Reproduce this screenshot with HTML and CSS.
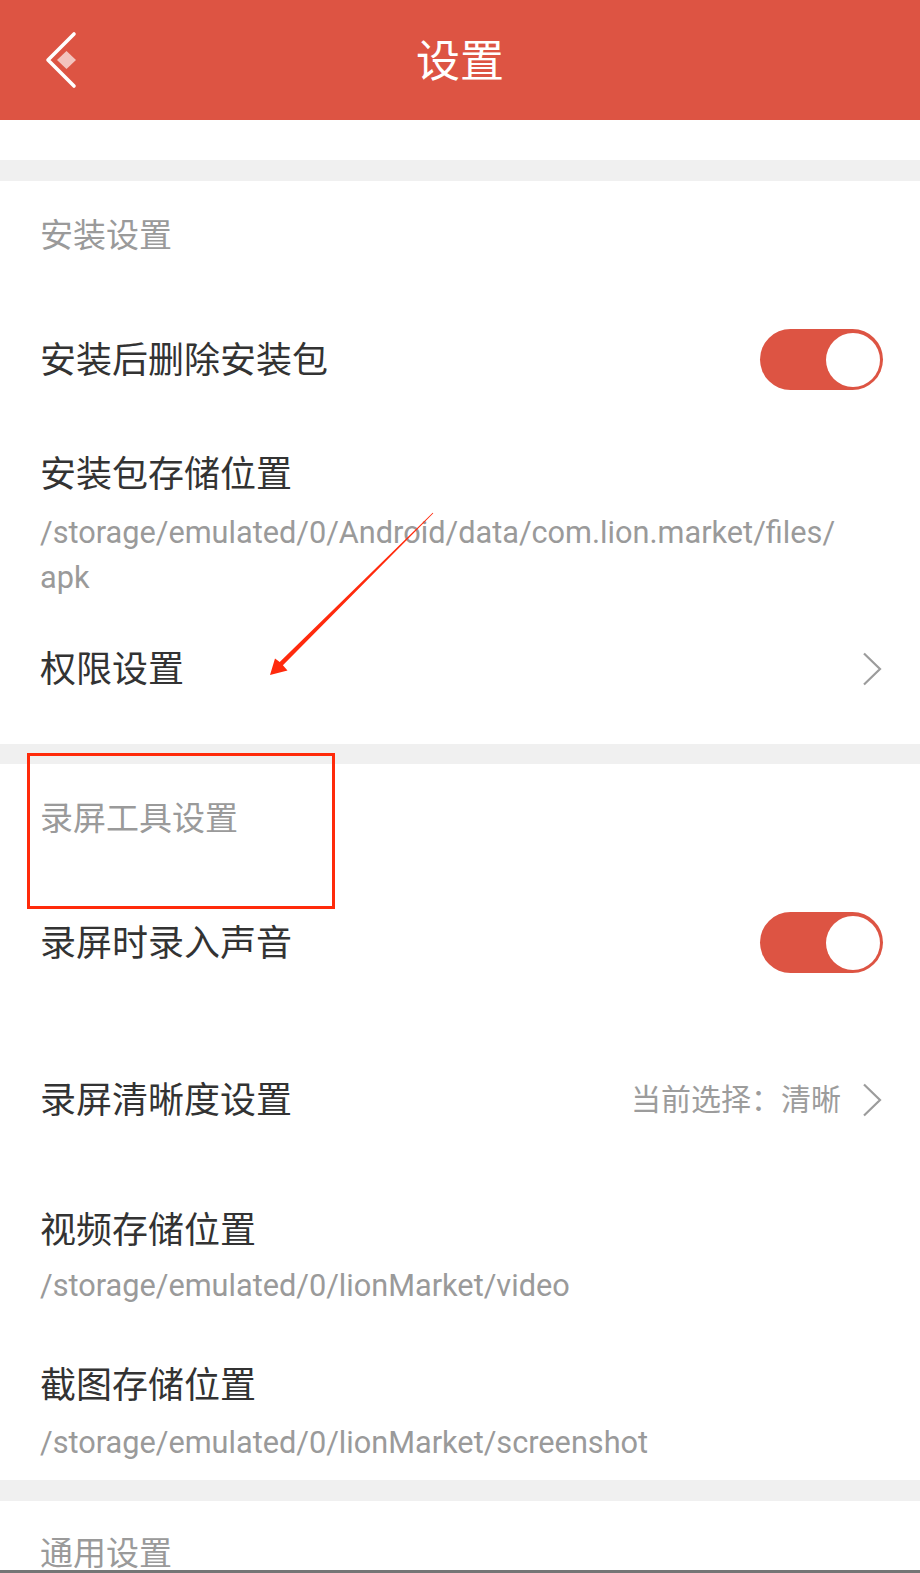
FILE: index.html
```html
<!DOCTYPE html>
<html lang="zh-CN">
<head>
<meta charset="utf-8">
<title>设置</title>
<link rel="stylesheet" href="styles.css">
</head>
<body>
<div class="app">
  <header class="topbar">
    <div class="back">
      <svg class="back-icon" width="44" height="64" viewBox="40 28 44 64">
        <polyline points="74,34 48,60 74,86" fill="none" stroke="#fff" stroke-width="3.6" stroke-linecap="round" stroke-linejoin="round"/>
        <polygon points="57,60 66.5,51 76,60 66.5,69" fill="#fff" fill-opacity="0.65"/>
      </svg>
    </div>
    <h1 class="title">设置</h1>
    <div class="spacer"></div>
  </header>

  <main class="content">
    <div class="top-blank"></div>

    <section class="section s1">
      <div class="sec-head h1pad">安装设置</div>
      <div class="row row-switch m73">
        <span class="row-title">安装后删除安装包</span>
        <span class="switch on"><span class="knob"></span></span>
      </div>
      <div class="row-stack m61">
        <div class="row-title">安装包存储位置</div>
        <div class="path p17">/storage/emulated/0/Android/data/com.lion.market/files/<wbr>apk</div>
      </div>
      <div class="row row-link m47 pb53">
        <span class="row-title">权限设置</span>
        <svg class="chev" width="20" height="34" viewBox="0 0 20 34"><polyline points="2,1.5 18,17 2,32.5" fill="none" stroke="#9c9c9c" stroke-width="2.2"/></svg>
      </div>
    </section>

    <section class="section s2">
      <div class="sec-head h2pad">录屏工具设置</div>
      <div class="row row-switch m74">
        <span class="row-title">录屏时录入声音</span>
        <span class="switch on"><span class="knob"></span></span>
      </div>
      <div class="row row-link m105">
        <span class="row-title">录屏清晰度设置</span>
        <span class="row-right">
          <span class="value">当前选择：清晰</span>
          <svg class="chev" width="20" height="34" viewBox="0 0 20 34"><polyline points="2,1.5 18,17 2,32.5" fill="none" stroke="#9c9c9c" stroke-width="2.2"/></svg>
        </span>
      </div>
      <div class="row-stack m86">
        <div class="row-title">视频存储位置</div>
        <div class="path p13">/storage/emulated/0/lionMarket/video</div>
      </div>
      <div class="row-stack m55 pb15">
        <div class="row-title">截图存储位置</div>
        <div class="path p16">/storage/emulated/0/lionMarket/screenshot</div>
      </div>
    </section>

    <section class="section s3">
      <div class="sec-head h3pad">通用设置</div>
    </section>
  </main>

  <div class="navline"></div>

  <div class="mark-box"></div>
  <svg class="mark-arrow" width="180" height="180" viewBox="260 505 180 180">
    <polygon points="270,675 287.5,670.5 282.9,665.3 433.3,513.3 432.7,512.7 279.7,662.1 275,658.5" fill="#ff2a0d"/>
  </svg>
</div>
</body>
</html>
```

FILE: styles.css
```css
* { box-sizing: border-box; }

html, body {
  margin: 0;
  padding: 0;
  background: #ffffff;
}

body {
  width: 920px;
  height: 1573px;
  overflow: hidden;
  font-family: "Noto Sans CJK SC", "Noto Sans", sans-serif;
  color: #333333;
}

.app {
  position: relative;
  width: 920px;
  height: 1573px;
  display: flex;
  flex-direction: column;
}

.topbar {
  flex: 0 0 120px;
  height: 120px;
  background: #dd5443;
  display: grid;
  grid-template-columns: 1fr auto 1fr;
  align-items: center;
}

.back {
  display: flex;
  align-items: center;
  padding-left: 40px;
}

.back-icon { display: block; }

.title {
  margin: -2px 0 2px;
  font-size: 44px;
  font-weight: 400;
  color: #ffffff;
  line-height: 60px;
}

.content {
  flex: 1 1 auto;
  overflow: hidden;
  background: #f0f0f0;
  display: flex;
  flex-direction: column;
}

.top-blank {
  flex: 0 0 40px;
  background: #ffffff;
}

.section {
  background: #ffffff;
  padding: 0 38px 0 40px;
  display: flex;
  flex-direction: column;
}

.s1 { margin-top: 21px; }
.s2 { margin-top: 20px; }
.s3 { margin-top: 21px; flex: 1 1 auto; }

.sec-head {
  font-size: 33px;
  line-height: 44px;
  color: #9a9a9a;
}
.h1pad { padding-top: 30px; margin-bottom: 1px; }
.h2pad { padding-top: 30px; }
.h3pad { padding-top: 32px; line-height: 36px; }

.row {
  display: flex;
  align-items: center;
  justify-content: space-between;
}

.row-title {
  font-size: 36px;
  line-height: 44px;
  color: #333333;
  margin-top: -3px;
  margin-bottom: 3px;
}

.row-switch { height: 61px; }

.row-link { height: 44px; }

.row-right {
  display: flex;
  align-items: center;
  gap: 21px;
}

.value {
  font-size: 30px;
  line-height: 44px;
  color: #9c9c9c;
  margin-top: -3px;
  margin-bottom: 3px;
}

.chev { display: block; }

.path {
  font-family: Roboto, "Noto Sans", sans-serif;
  font-size: 30.7px;
  line-height: 45px;
  color: #9a9a9a;
  padding-right: 30px;
}

.m73 { margin-top: 73px; }
.m74 { margin-top: 74px; }
.m61 { margin-top: 61.5px; }
.m47 { margin-top: 47px; }
.m105 { margin-top: 105px; }
.m86 { margin-top: 86px; }
.m55 { margin-top: 55px; }
.p17 { margin-top: 17.5px; }
.p13 { margin-top: 13.5px; }
.p16 { margin-top: 16px; }
.pb53 { margin-bottom: 53px; }
.pb15 { margin-bottom: 15px; }

.switch {
  width: 123px;
  height: 61px;
  border-radius: 31px;
  background: #dd5443;
  padding: 3.5px;
  display: flex;
  justify-content: flex-end;
  margin-right: -1px;
}

.knob {
  width: 54px;
  height: 54px;
  border-radius: 50%;
  background: #ffffff;
}

.navline {
  flex: 0 0 3px;
  background: #757575;
}

.mark-box {
  position: absolute;
  left: 27px;
  top: 753px;
  width: 308px;
  height: 156px;
  border: 3px solid #ff2a0a;
}

.mark-arrow {
  position: absolute;
  left: 260px;
  top: 505px;
  pointer-events: none;
}
```
